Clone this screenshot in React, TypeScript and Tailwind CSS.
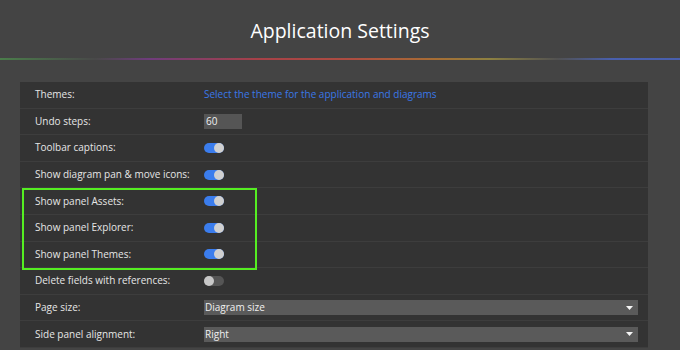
import React from "react";

function Toggle({ on }: { on: boolean }) {
  return on ? (
    <div className="relative h-[10px] w-[20px] rounded-full bg-[#3b7ded]">
      <div className="absolute right-0 top-0 h-[10px] w-[10px] rounded-full bg-[#d0d0d0]" />
    </div>
  ) : (
    <div className="relative h-[10px] w-[20px] rounded-full bg-[#555555]">
      <div className="absolute left-0 top-0 h-[10px] w-[10px] rounded-full bg-[#c8c8c8]" />
    </div>
  );
}

function Select({ value }: { value: string }) {
  return (
    <div className="flex h-[15px] w-[434px] items-center justify-between bg-[#5a5a5a] pl-[1px] pr-[5px] text-[10px] text-[#f0f0f0]">
      <span>{value}</span>
      <svg width="7" height="4" viewBox="0 0 7 4">
        <path d="M0 0 H7 L3.5 4 Z" fill="#f5f5f5" />
      </svg>
    </div>
  );
}

function Row({ label, children }: { label: string; children: React.ReactNode }) {
  return (
    <div className="flex h-[26.6px] items-center border-b border-[#3d3d3d]">
      <div className="w-[184px] whitespace-nowrap pl-[15px] text-[10px] text-[#e6e6e6]">{label}</div>
      <div className="flex items-center">{children}</div>
    </div>
  );
}

export default function App() {
  return (
    <div
      className="h-[350px] w-[680px] overflow-hidden bg-[#444444]"
      style={{ fontFamily: '"Open Sans", "Noto Sans", sans-serif' }}
    >
      <div className="flex h-[58px] items-center justify-center pt-[3px] text-[19.5px] text-white">
        Application Settings
      </div>
      <div
        className="h-[2px] w-full opacity-80"
        style={{
          background:
            "linear-gradient(90deg, #4c8c4c 0%, #4a4a4a 14%, #7a3a8a 22%, #c04048 38%, #c85040 52%, #c07830 64%, #a09040 72%, #555555 82%, #4a66c8 90%, #4a66c8 100%)",
        }}
      />
      <div className="ml-[20px] mt-[22px] w-[628px] bg-[#333333]">
        <Row label="Themes:">
          <span className="text-[10px] text-[#3a78e8]">Select the theme for the application and diagrams</span>
        </Row>
        <Row label="Undo steps:">
          <div className="flex h-[15px] w-[38px] items-center bg-[#555555] pl-[2px] text-[10px] text-[#f0f0f0]">60</div>
        </Row>
        <Row label="Toolbar captions:">
          <Toggle on />
        </Row>
        <Row label="Show diagram pan & move icons:">
          <Toggle on />
        </Row>
        <div className="relative">
          <div className="pointer-events-none absolute left-[2px] top-0 h-[82px] w-[235px] border-2 border-[#55ee22]" />
          <Row label="Show panel Assets:">
            <Toggle on />
          </Row>
          <Row label="Show panel Explorer:">
            <Toggle on />
          </Row>
          <Row label="Show panel Themes:">
            <Toggle on />
          </Row>
        </div>
        <Row label="Delete fields with references:">
          <Toggle on={false} />
        </Row>
        <Row label="Page size:">
          <Select value="Diagram size" />
        </Row>
        <Row label="Side panel alignment:">
          <Select value="Right" />
        </Row>
      </div>
    </div>
  );
}
